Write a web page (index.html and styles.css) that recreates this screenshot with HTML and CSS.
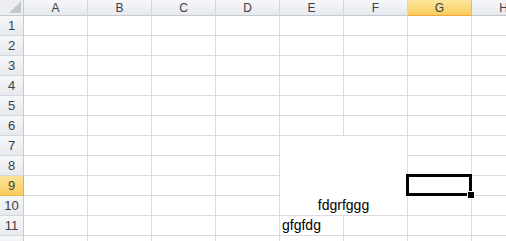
FILE: index.html
```html
<!DOCTYPE html>
<html lang="en">
<head>
    <meta charset="UTF-8">
    <title>Sheet1</title>
    <link rel="stylesheet" href="styles.css">
</head>
<body>
    <div class="sheet">
        <!-- column headers -->
        <div class="corner">
            <svg width="23" height="15" viewBox="0 0 23 15"><polygon points="21,1 21,13 9,13" fill="#c3c6ca"/></svg>
        </div>
        <div class="col-head">A</div>
        <div class="col-head">B</div>
        <div class="col-head">C</div>
        <div class="col-head">D</div>
        <div class="col-head">E</div>
        <div class="col-head">F</div>
        <div class="col-head active">G</div>
        <div class="col-head">H</div>

        <!-- rows 1 to 6 -->
        <div class="row-head">1</div><div class="cell"></div><div class="cell"></div><div class="cell"></div><div class="cell"></div><div class="cell"></div><div class="cell"></div><div class="cell"></div><div class="cell"></div>
        <div class="row-head">2</div><div class="cell"></div><div class="cell"></div><div class="cell"></div><div class="cell"></div><div class="cell"></div><div class="cell"></div><div class="cell"></div><div class="cell"></div>
        <div class="row-head">3</div><div class="cell"></div><div class="cell"></div><div class="cell"></div><div class="cell"></div><div class="cell"></div><div class="cell"></div><div class="cell"></div><div class="cell"></div>
        <div class="row-head">4</div><div class="cell"></div><div class="cell"></div><div class="cell"></div><div class="cell"></div><div class="cell"></div><div class="cell"></div><div class="cell"></div><div class="cell"></div>
        <div class="row-head">5</div><div class="cell"></div><div class="cell"></div><div class="cell"></div><div class="cell"></div><div class="cell"></div><div class="cell"></div><div class="cell"></div><div class="cell"></div>
        <div class="row-head">6</div><div class="cell"></div><div class="cell"></div><div class="cell"></div><div class="cell"></div><div class="cell"></div><div class="cell"></div><div class="cell"></div><div class="cell"></div>

        <!-- rows 7 to 10, E7:F10 merged -->
        <div class="row-head">7</div><div class="cell"></div><div class="cell"></div><div class="cell"></div><div class="cell"></div>
        <div class="cell merged">fdgrfggg</div>
        <div class="cell"></div><div class="cell"></div>
        <div class="row-head">8</div><div class="cell"></div><div class="cell"></div><div class="cell"></div><div class="cell"></div><div class="cell"></div><div class="cell"></div>
        <div class="row-head active">9</div><div class="cell"></div><div class="cell"></div><div class="cell"></div><div class="cell"></div><div class="cell selected"></div><div class="cell"></div>
        <div class="row-head">10</div><div class="cell"></div><div class="cell"></div><div class="cell"></div><div class="cell"></div><div class="cell"></div><div class="cell"></div>

        <div class="row-head">11</div><div class="cell"></div><div class="cell"></div><div class="cell"></div><div class="cell"></div><div class="cell">gfgfdg</div><div class="cell"></div><div class="cell"></div><div class="cell"></div>
        <div class="row-head"></div><div class="cell"></div><div class="cell"></div><div class="cell"></div><div class="cell"></div><div class="cell"></div><div class="cell"></div><div class="cell"></div><div class="cell"></div>
    </div>
</body>
</html>
```

FILE: styles.css
```css
body {
    margin: 0;
    overflow: hidden;
    background: #fff;
    font-family: "Liberation Sans", Arial, sans-serif;
}

.sheet {
    display: grid;
    grid-template-columns: 24px repeat(8, 64px);
    grid-template-rows: 16px repeat(12, 20px);
}

.sheet > div {
    box-sizing: border-box;
}

/* headers */
.corner,
.col-head,
.row-head {
    background: linear-gradient(#f6f7f9, #e6e9ee);
    color: #3a4049;
    font-size: 12px;
    border-right: 1px solid #c6c9ce;
    border-bottom: 1px solid #c6c9ce;
    display: flex;
    align-items: center;
    justify-content: center;
}

.corner {
    background: #eceef1;
}

.corner svg {
    display: block;
}

.col-head {
    border-right-color: #d4d6da;
    padding-top: 1px;
}

.row-head {
    border-bottom-color: #d4d6da;
    font-size: 13px;
}

.col-head.active {
    background: linear-gradient(#fce59c, #f8cd5e);
    border-bottom-color: #f2a53d;
    border-right-color: #e9b950;
}

.row-head.active {
    background: linear-gradient(#fce39a, #f7cc5c);
    border-right-color: #f2a53d;
    border-bottom-color: #e9b950;
}

/* cells */
.cell {
    border-right: 1px solid #dadcdd;
    border-bottom: 1px solid #dadcdd;
    font-size: 14px;
    color: #000;
    line-height: 19px;
    padding: 0 2px;
    white-space: nowrap;
    display: flex;
    align-items: flex-end;
}

.merged {
    grid-column: span 2;
    grid-row: span 4;
    justify-content: center;
}

.selected {
    position: relative;
}

.selected::after {
    content: "";
    position: absolute;
    left: -2px;
    top: -2px;
    right: -1px;
    bottom: -1px;
    border: 3px solid #000;
}

.selected::before {
    content: "";
    position: absolute;
    right: -4px;
    bottom: -4px;
    width: 6px;
    height: 6px;
    background: #000;
    border: 1px solid #fff;
    z-index: 1;
}
```
